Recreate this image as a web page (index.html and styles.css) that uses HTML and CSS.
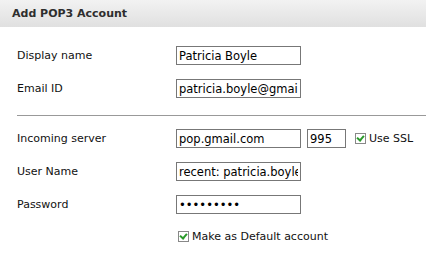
FILE: index.html
```html
<!DOCTYPE html>
<html lang="en">
<head>
  <meta charset="UTF-8" />
  <title>Add POP3 Account</title>
  <link rel="stylesheet" href="styles.css">
</head>
<body>

<div class="dialog-head">
  <h1>Add POP3 Account</h1>
</div>

<form class="account-form">
  <div class="row">
    <label for="name">Display name</label>
    <input type="text" id="name" value="Patricia Boyle" />
  </div>
  <div class="row">
    <label for="email">Email ID</label>
    <input type="text" id="email" value="patricia.boyle@gmail.com" />
  </div>

  <hr />

  <div class="row">
    <label for="server">Incoming server</label>
    <input type="text" id="server" value="pop.gmail.com" />
    <input type="text" id="port" class="port" value="995" />
    <span class="check"><span class="box"></span> Use SSL</span>
  </div>
  <div class="row">
    <label for="user">User Name</label>
    <input type="text" id="user" value="recent: patricia.boyle@gmail.com" />
  </div>
  <div class="row">
    <label for="pass">Password</label>
    <input type="password" id="pass" value="123456789" />
  </div>
  <div class="row default-row">
    <span class="check"><span class="box"></span> Make as Default account</span>
  </div>
</form>

</body>
</html>
```

FILE: styles.css
```css
body {
  margin: 0;
  background: #fff;
  font-family: "DejaVu Sans", Verdana, sans-serif;
  font-size: 11px;
  color: #111;
}
.dialog-head {
  height: 27px;
  background: linear-gradient(#f2f2f2, #e0e0e0);
  padding: 0 12px;
  display: flex;
  align-items: center;
}
.dialog-head h1 {
  margin: 0;
  font-size: 11px;
  font-weight: bold;
  color: #2e2e2e;
}
.account-form {
  padding: 19px 0 0 17px;
}
.row {
  display: flex;
  align-items: center;
  height: 19px;
  margin-bottom: 14px;
}
.row label {
  width: 159px;
}
input {
  box-sizing: border-box;
  width: 125px;
  height: 19px;
  margin: 0;
  padding: 0 2px;
  border: 1px solid #777;
  font: 11.5px "DejaVu Sans", Verdana, sans-serif;
  color: #000;
}
input.port {
  width: 39px;
  margin-left: 6px;
}
hr {
  border: 0;
  border-top: 1px solid #999;
  margin: 17px 0 13px;
}
.check {
  display: flex;
  align-items: center;
  gap: 3px;
  margin-left: 9px;
}
.box {
  width: 9px;
  height: 9px;
  border: 1px solid #888;
  background: #fff;
  position: relative;
}
.box::after {
  content: "";
  position: absolute;
  left: 2px;
  top: 0px;
  width: 3px;
  height: 5px;
  border: solid #2a9a2a;
  border-width: 0 2px 2px 0;
  transform: rotate(40deg);
}
.default-row {
  margin-top: -1px;
}
.default-row .check {
  margin-left: 161px;
}
```
